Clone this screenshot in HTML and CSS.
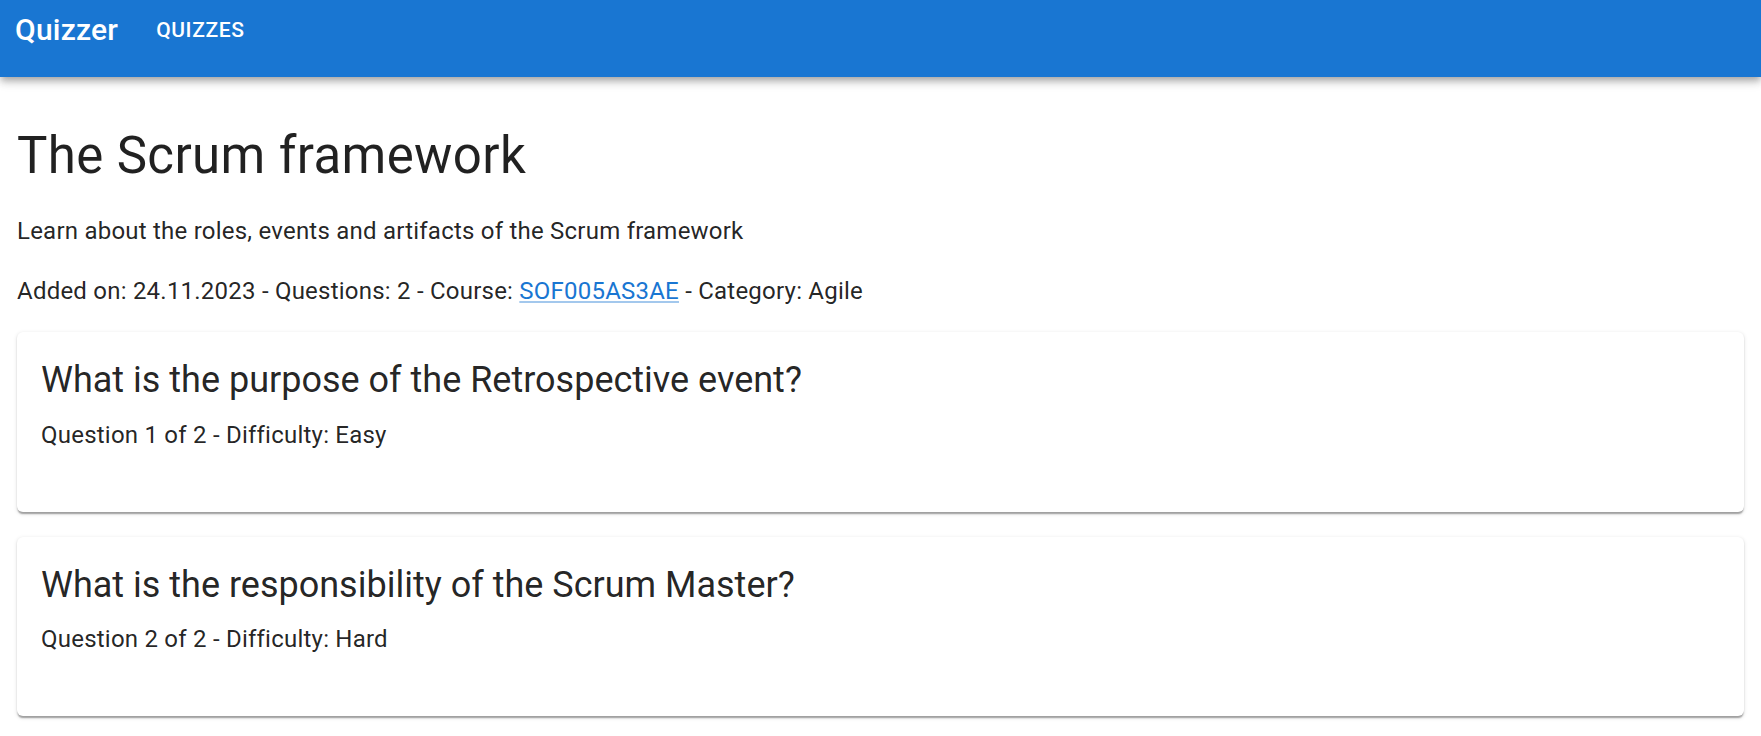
FILE: index.html
```html
<!DOCTYPE html>
<html lang="en">
<head>
<meta charset="utf-8">
<title>Quizzer</title>
<link rel="stylesheet" href="styles.css">
</head>
<body>
<header class="appbar">
  <div class="toolbar">
    <span class="brand">Quizzer</span>
    <a class="nav-btn" href="#">Quizzes</a>
  </div>
</header>
<main class="main">
  <h1 class="page-title">The Scrum framework</h1>
  <p class="body-text">Learn about the roles, events and artifacts of the Scrum framework</p>
  <p class="body-text meta">Added on: 24.11.2023 - Questions: 2 - Course: <a class="link" href="#">SOF005AS3AE</a> - Category: Agile</p>
  <div class="cards">
    <section class="card">
      <h2 class="card-title">What is the purpose of the Retrospective event?</h2>
      <p class="card-meta">Question 1 of 2 - Difficulty: Easy</p>
    </section>
    <section class="card">
      <h2 class="card-title">What is the responsibility of the Scrum Master?</h2>
      <p class="card-meta">Question 2 of 2 - Difficulty: Hard</p>
    </section>
  </div>
</main>
</body>
</html>
```
FILE: styles.css
```css
* { box-sizing: border-box; }
html, body {
  margin: 0;
  padding: 0;
  background: #fff;
  font-family: Roboto, "Liberation Sans", Arial, sans-serif;
  color: rgba(0, 0, 0, 0.87);
}
.appbar {
  height: 77px;
  background: #1976d2;
  color: #fff;
  box-shadow: 0 3px 6px -1.5px rgba(0,0,0,0.2), 0 6px 7.5px 0 rgba(0,0,0,0.14), 0 1.5px 15px 0 rgba(0,0,0,0.12);
  position: relative;
  z-index: 1;
}
.toolbar {
  height: 60px;
  display: flex;
  align-items: center;
  padding-left: 15px;
}
.brand {
  font-size: 30px;
  font-weight: 500;
  line-height: 1.6;
  letter-spacing: 0.0075em;
}
.nav-btn {
  margin-left: 26px;
  padding: 0 12px;
  font-size: 21px;
  font-weight: 500;
  line-height: 1.75;
  letter-spacing: 0.02857em;
  text-transform: uppercase;
  color: #fff;
  text-decoration: none;
}
.main {
  padding: 47px 17px 20px;
}
.page-title {
  margin: 0 0 25.5px;
  font-size: 51px;
  font-weight: 400;
  line-height: 63px;
  letter-spacing: 0.00735em;
}
.body-text {
  margin: 0 0 24px;
  font-size: 24px;
  line-height: 36px;
  letter-spacing: 0.00938em;
}
.meta { margin-bottom: 23.5px; }
.link {
  color: #1976d2;
  text-decoration: underline;
  text-decoration-color: rgba(25, 118, 210, 0.4);
}
.cards {
  display: flex;
  flex-direction: column;
  gap: 25px;
}
.card {
  background: #fff;
  border-radius: 6px;
  box-shadow: 0 3px 1.5px -1.5px rgba(0,0,0,0.2), 0 1.5px 1.5px 0 rgba(0,0,0,0.14), 0 1.5px 4.5px 0 rgba(0,0,0,0.12);
  padding: 24px 24px 59px;
}
.card-title {
  margin: 0 0 12.6px;
  font-size: 36px;
  font-weight: 400;
  line-height: 48px;
}
.card-meta {
  margin: 0;
  font-size: 24px;
  line-height: 36px;
  letter-spacing: 0.00938em;
}
```
